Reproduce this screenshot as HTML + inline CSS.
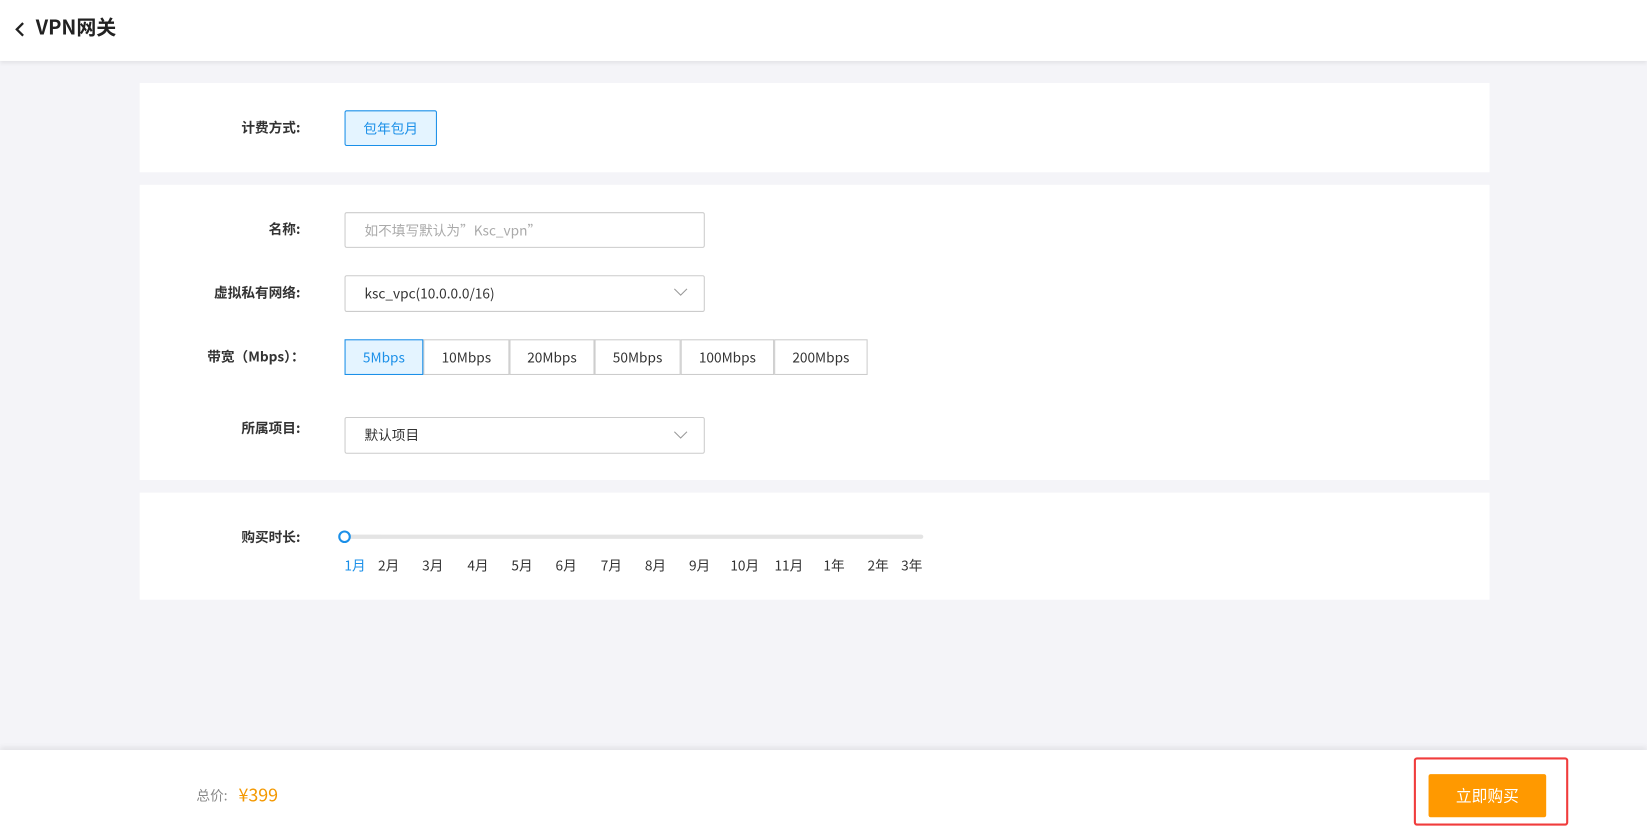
<!DOCTYPE html>
<html><head><meta charset="utf-8"><style>
*{margin:0;padding:0;box-sizing:border-box}
html,body{width:1647px;height:836px;overflow:hidden;background:#f4f4f8}
#w{width:1568px;height:796px;transform:scale(1.0504);transform-origin:0 0;position:relative;font-family:"Noto Sans CJK SC","Liberation Sans",sans-serif;font-size:13px;color:#333;line-height:18px}
.hdr{position:absolute;left:0;top:0;width:1568px;height:58px;background:#fff;box-shadow:0 2px 4px rgba(0,0,0,.08)}
.hdr .t{position:absolute;left:34px;top:13px;font-size:19px;line-height:26px;font-weight:bold;color:#222}
.p{position:absolute;left:133px;width:1285px;background:#fff}
.lbl{position:absolute;font-size:13px;font-weight:bold;color:#333;text-align:right;white-space:nowrap}
.a{position:absolute}
.box{position:absolute;border:1px solid #ccc;border-radius:2px;background:#fff;font-size:13px;padding-left:18px;line-height:32px}
.bw{position:absolute;top:323px;height:34px;border:1px solid #ccc;margin-left:-1px;text-align:center;line-height:32px;font-size:13px;color:#333;background:#fff}
.m{position:absolute;top:529px;font-size:13px;color:#333;transform:translateX(-50%)}
</style></head><body><div id="w">
<div class="hdr">
<svg style="position:absolute;left:13px;top:19px" width="12" height="18" viewBox="0 0 12 18"><path d="M9 3 L3 9 L9 15" stroke="#222" stroke-width="2.2" fill="none"/></svg>
<div class="t">VPN网关</div></div>

<div class="p" style="top:79px;height:85px"></div>
<div class="p" style="top:176px;height:281px"></div>
<div class="p" style="top:469px;height:102px"></div>

<div class="lbl" style="top:112px;left:0;width:286px">计费方式:</div>
<div class="a" style="left:328px;top:105px;width:88px;height:34px;border:1px solid #1a8fe8;background:#e4f4ff;color:#1a8fe8;border-radius:2px;text-align:center;line-height:32px">包年包月</div>

<div class="lbl" style="top:209px;left:0;width:286px">名称:</div>
<div class="box" style="left:328px;top:202px;width:343px;height:34px;color:#aaa">如不填写默认为”Ksc_vpn”</div>

<div class="lbl" style="top:269px;left:0;width:286px">虚拟私有网络:</div>
<div class="box" style="left:328px;top:262px;width:343px;height:35px">ksc_vpc(10.0.0.0/16)</div>
<svg class="a" style="left:641px;top:273px" width="14" height="10"><path d="M1 2 L7 8 L13 2" stroke="#999" fill="none"/></svg>

<div class="lbl" style="top:330px;left:0;width:290px">带宽（Mbps）：</div>
<div class="bw" style="left:329px;width:75px;border-color:#1a8fe8;background:#e4f4ff;color:#1a8fe8;z-index:2">5Mbps</div>
<div class="bw" style="left:404px;width:82px">10Mbps</div>
<div class="bw" style="left:486px;width:81px">20Mbps</div>
<div class="bw" style="left:567px;width:82px">50Mbps</div>
<div class="bw" style="left:649px;width:89px">100Mbps</div>
<div class="bw" style="left:738px;width:89px">200Mbps</div>

<div class="lbl" style="top:398px;left:0;width:286px">所属项目:</div>
<div class="box" style="left:328px;top:397px;width:343px;height:35px">默认项目</div>
<svg class="a" style="left:641px;top:409px" width="14" height="10"><path d="M1 2 L7 8 L13 2" stroke="#999" fill="none"/></svg>

<div class="lbl" style="top:502px;left:0;width:286px">购买时长:</div>
<div class="a" style="left:328px;top:509px;width:551px;height:4px;background:#e4e4e4;border-radius:2px"></div>
<div class="a" style="left:322px;top:505px;width:12px;height:12px;border:2px solid #1a8fe8;border-radius:50%;background:#fff"></div>
<div class="m" style="left:338px;color:#1a8fe8">1月</div>
<div class="m" style="left:370px">2月</div>
<div class="m" style="left:412px">3月</div>
<div class="m" style="left:455px">4月</div>
<div class="m" style="left:497px">5月</div>
<div class="m" style="left:539px">6月</div>
<div class="m" style="left:582px">7月</div>
<div class="m" style="left:624px">8月</div>
<div class="m" style="left:666px">9月</div>
<div class="m" style="left:709px">10月</div>
<div class="m" style="left:751px">11月</div>
<div class="m" style="left:794px">1年</div>
<div class="m" style="left:836px">2年</div>
<div class="m" style="left:868px">3年</div>

<div class="a" style="left:0;top:714px;width:1568px;height:90px;background:#fff;box-shadow:0 -3px 5px rgba(0,0,0,.07)"></div>
<div class="a" style="left:187px;top:748px;font-size:13px;color:#888">总价:</div>
<div class="a" style="left:227px;top:745px;font-size:17px;line-height:22px;color:#f39800">¥399</div>
<div class="a" style="left:1346px;top:721px;width:147px;height:65px;border:2px solid #f03c3c;border-radius:3px"></div>
<div class="a" style="left:1360px;top:737px;width:112px;height:41px;background:#ff9900;border-radius:2px;color:#fff;font-size:15px;text-align:center;line-height:41px">立即购买</div>
</div></body></html>
